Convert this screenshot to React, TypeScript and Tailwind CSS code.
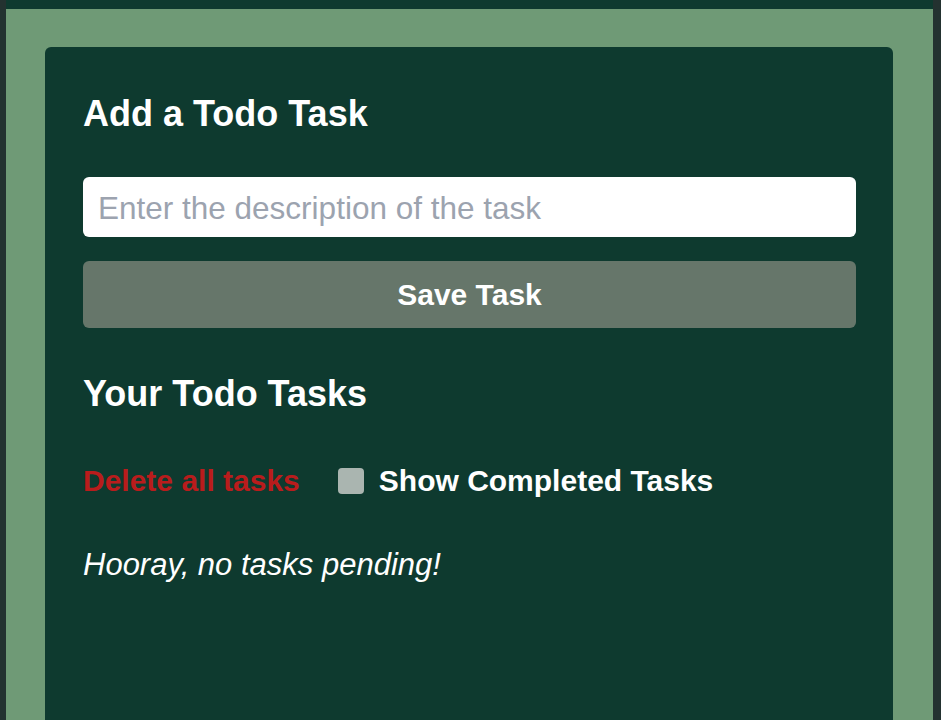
import { useState } from 'react'

// Ecrã único de tarefas — cartão verde escuro sobre fundo verde claro
function App() {
  const [descricao, setDescricao] = useState('')
  const [mostrarConcluidas, setMostrarConcluidas] = useState(false)

  return (
    <div
      className="min-h-screen h-[720px] flex flex-col bg-[#6f9a76] border-l-[6px] border-r-[8px] border-[#233230] overflow-hidden"
      style={{ fontFamily: '"Liberation Sans", Arial, sans-serif' }}
    >
      <div className="h-[9px] bg-[#0e3a2f] shrink-0" />
      <div className="flex-1 pt-[38px] pl-[39px] pr-[40px]">
        <div className="h-full bg-[#0e3a2f] rounded-t-[6px] px-[38px] pr-[37px] pt-[45px]">
          <h2 className="text-[36px] leading-[44px] font-bold text-white">Add a Todo Task</h2>

          <input
            type="text"
            value={descricao}
            onChange={(e) => setDescricao(e.target.value)}
            placeholder="Enter the description of the task"
            className="mt-[41px] block w-full h-[60px] rounded-[6px] bg-white px-[15px] pt-[3px] text-[31.5px] text-gray-800 placeholder:text-[#9ca3af] outline-none"
          />

          <button
            type="button"
            className="mt-[24px] block w-full h-[67px] rounded-[6px] bg-[#66766a] text-white text-[30px] font-bold"
          >
            Save Task
          </button>

          <h2 className="mt-[44px] text-[36px] leading-[44px] font-bold text-white">Your Todo Tasks</h2>

          <div className="mt-[47px] flex items-center h-[36px]">
            <button type="button" className="text-[30px] leading-[36px] font-bold text-[#b91c1c]">
              Delete all tasks
            </button>
            <label className="ml-[38px] flex items-center gap-[15px] cursor-pointer">
              <span
                onClick={() => setMostrarConcluidas(!mostrarConcluidas)}
                className="w-[26px] h-[26px] rounded-[4px] bg-[#aab5b0]"
              />
              <span className="text-[30px] leading-[36px] font-bold text-white">Show Completed Tasks</span>
            </label>
          </div>

          <p className="mt-[48px] text-[31px] leading-[36px] italic text-white">Hooray, no tasks pending!</p>
        </div>
      </div>
    </div>
  )
}

export default App
